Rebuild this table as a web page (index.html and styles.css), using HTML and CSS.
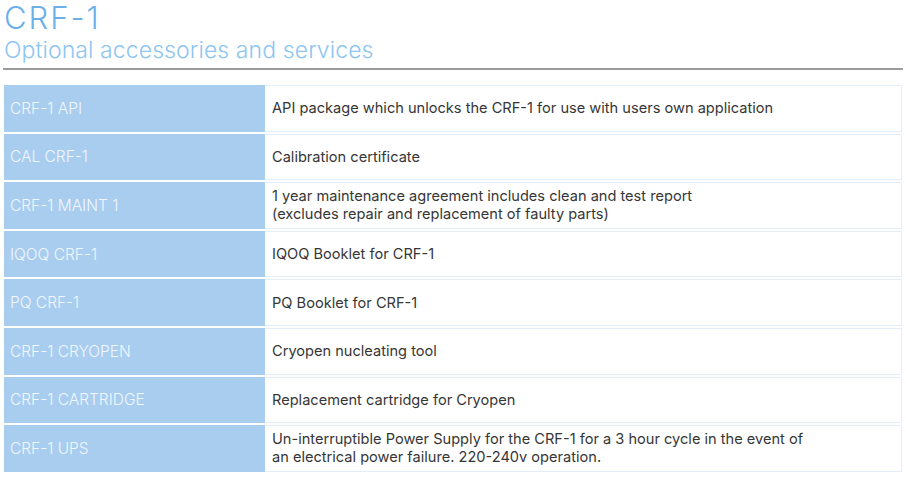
FILE: index.html
```html
<!DOCTYPE html>
<html>
<head>
<meta charset="utf-8">
<link rel="stylesheet" href="styles.css">
</head>
<body>
<header class="head">
  <h1 class="title">CRF-1</h1>
  <h2 class="subtitle">Optional accessories and services</h2>
</header>
<div class="table">
  <div class="code">CRF-1 API</div><div class="desc">API package which unlocks the CRF-1 for use with users own application</div>
  <div class="code">CAL CRF-1</div><div class="desc">Calibration certificate</div>
  <div class="code">CRF-1 MAINT 1</div><div class="desc">1 year maintenance agreement includes clean and test report<br>(excludes repair and replacement of faulty parts)</div>
  <div class="code">IQOQ CRF-1</div><div class="desc">IQOQ Booklet for CRF-1</div>
  <div class="code">PQ CRF-1</div><div class="desc">PQ Booklet for CRF-1</div>
  <div class="code">CRF-1 CRYOPEN</div><div class="desc">Cryopen nucleating tool</div>
  <div class="code">CRF-1 CARTRIDGE</div><div class="desc">Replacement cartridge for Cryopen</div>
  <div class="code">CRF-1 UPS</div><div class="desc">Un-interruptible Power Supply for the CRF-1 for a 3 hour cycle in the event of<br>an electrical power failure. 220-240v operation.</div>
</div>
</body>
</html>
```
FILE: styles.css
```css
html, body {
  margin: 0;
  padding: 0;
  background: #ffffff;
}
body {
  font-family: "Inter", "Liberation Sans", sans-serif;
  width: 906px;
  height: 477px;
  overflow: hidden;
}
.head {
  margin: 0 3px;
  padding: 0 0 0 1px;
  border-bottom: 2px solid #9b9c9e;
  height: 70px;
  box-sizing: border-box;
}
.title {
  margin: 0;
  font-weight: 300;
  font-size: 31px;
  line-height: 35px;
  letter-spacing: 2px;
  color: #6cb0ea;
}
.subtitle {
  margin: 2px 0 0 0;
  font-weight: 300;
  font-size: 23px;
  line-height: 27px;
  letter-spacing: 0.1px;
  color: #8ec5f1;
}
.table {
  margin: 15px 4px 0 4px;
  display: grid;
  grid-template-columns: 261px 637px;
  grid-auto-rows: 46.6px;
  row-gap: 2px;
}
.code {
  background: #a8cdef;
  color: #f0f7fd;
  font-size: 15.5px;
  font-weight: 300;
  display: flex;
  align-items: center;
  padding-left: 6px;
}
.desc {
  background: #fff;
  border: 1px solid #e2eefa;
  border-left: none;
  color: #363636;
  font-size: 14.6px;
  line-height: 18px;
  display: flex;
  align-items: center;
  padding-left: 7px;
}
```
